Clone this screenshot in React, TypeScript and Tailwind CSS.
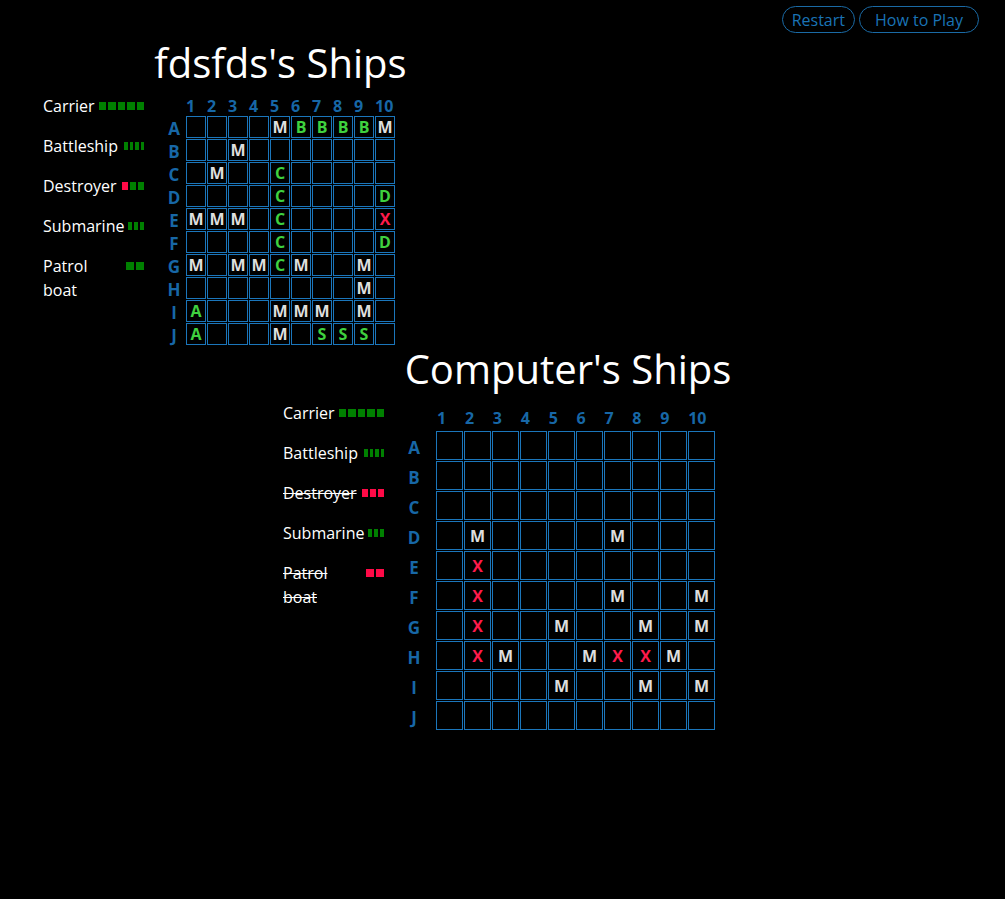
import React from "react";

type Ship = { name: string; sq: string; colors: string[]; sunk?: boolean; wrap?: boolean };

const G = "g";
const R = "r";

const playerShips: Ship[] = [
  { name: "Carrier", sq: "w-[7.4px]", colors: [G, G, G, G, G] },
  { name: "Battleship", sq: "w-[3.5px]", colors: [G, G, G, G] },
  { name: "Destroyer", sq: "w-[6px]", colors: [R, G, G] },
  { name: "Submarine", sq: "w-[4px]", colors: [G, G, G] },
  { name: "Patrol boat", sq: "w-[8px]", colors: [G, G], wrap: true },
];

const computerShips: Ship[] = [
  { name: "Carrier", sq: "w-[7.4px]", colors: [G, G, G, G, G] },
  { name: "Battleship", sq: "w-[3.5px]", colors: [G, G, G, G] },
  { name: "Destroyer", sq: "w-[6px]", colors: [R, R, R], sunk: true },
  { name: "Submarine", sq: "w-[4px]", colors: [G, G, G] },
  { name: "Patrol boat", sq: "w-[8px]", colors: [R, R], wrap: true, sunk: true },
];

function makeBoard(entries: Record<string, string>): string[][] {
  const rows = "ABCDEFGHIJ".split("");
  return rows.map((r) => {
    const row: string[] = [];
    for (let c = 1; c <= 10; c++) row.push(entries[r + c] || "");
    return row;
  });
}

const playerBoard = makeBoard({
  A5: "M", A6: "B", A7: "B", A8: "B", A9: "B", A10: "M",
  B3: "M",
  C2: "M", C5: "C",
  D5: "C", D10: "D",
  E1: "M", E2: "M", E3: "M", E5: "C", E10: "X",
  F5: "C", F10: "D",
  G1: "M", G3: "M", G4: "M", G5: "C", G6: "M", G9: "M",
  H9: "M",
  I1: "A", I5: "M", I6: "M", I7: "M", I9: "M",
  J1: "A", J5: "M", J7: "S", J8: "S", J9: "S",
});

const computerBoard = makeBoard({
  D2: "M", D7: "M",
  E2: "X",
  F2: "X", F7: "M", F10: "M",
  G2: "X", G5: "M", G8: "M", G10: "M",
  H2: "X", H3: "M", H6: "M", H7: "X", H8: "X", H9: "M",
  I5: "M", I8: "M", I10: "M",
});

function letterColor(v: string) {
  if (v === "M") return "text-[#dedede]";
  if (v === "X") return "text-[#ff1a4b]";
  return "text-[#3fd13f]";
}

function ShipList({ ships }: { ships: Ship[] }) {
  return (
    <div className="flex w-[101px] flex-col gap-4 text-[16px] leading-6 text-white">
      {ships.map((s) => (
        <div key={s.name} className="flex items-start justify-between">
          <span className={(s.wrap ? "w-[50px] " : "") + (s.sunk ? "line-through decoration-white" : "")}>
            {s.name}
          </span>
          <div className="flex h-6 items-center gap-[2px]">
            {s.colors.map((c, i) => (
              <div
                key={i}
                className={s.sq + " h-[8px] " + (c === "g" ? "bg-[#008000]" : "bg-[#ff0a47]")}
              />
            ))}
          </div>
        </div>
      ))}
    </div>
  );
}

const ROWS = "ABCDEFGHIJ".split("");
const COLS = ["1", "2", "3", "4", "5", "6", "7", "8", "9", "10"];

function SmallBoard({ board }: { board: string[][] }) {
  return (
    <div className="flex flex-col">
      <div className="ml-[21px] flex h-[20px] items-center">
        {COLS.map((c) => (
          <div key={c} className="w-[21px] text-[16px] font-bold leading-none text-[#1767a6]">
            {c}
          </div>
        ))}
      </div>
      <div className="flex">
        <div className="flex w-[18px] flex-col gap-[1px]">
          {ROWS.map((r) => (
            <div key={r} className="flex h-[22px] items-center justify-center pt-[3px] text-[17px] font-bold leading-none text-[#1767a6]">
              {r}
            </div>
          ))}
        </div>
        <div className="ml-[3px] grid grid-cols-[repeat(10,20px)] gap-[1px]">
          {board.flat().map((v, i) => (
            <div
              key={i}
              className={
                "flex h-[22px] w-[20px] items-center justify-center border border-[#1b76bb] text-[16px] font-bold leading-none " +
                letterColor(v)
              }
            >
              {v}
            </div>
          ))}
        </div>
      </div>
    </div>
  );
}

function BigBoard({ board }: { board: string[][] }) {
  return (
    <div className="flex flex-col">
      <div className="ml-[32px] flex h-[20px] items-center">
        {COLS.map((c) => (
          <div key={c} className="w-[28px] pl-[1px] text-[16px] font-bold leading-none text-[#1767a6]">
            {c}
          </div>
        ))}
      </div>
      <div className="mt-[3px] flex">
        <div className="flex w-[20px] flex-col gap-[1px]">
          {ROWS.map((r) => (
            <div key={r} className="flex h-[29px] items-center justify-center pt-[4px] text-[17px] font-bold leading-none text-[#1767a6]">
              {r}
            </div>
          ))}
        </div>
        <div className="ml-[12px] grid grid-cols-[repeat(10,27px)] gap-[1px]">
          {board.flat().map((v, i) => (
            <div
              key={i}
              className={
                "flex h-[29px] w-[27px] items-center justify-center border border-[#1b76bb] text-[16px] font-bold leading-none " +
                letterColor(v)
              }
            >
              {v}
            </div>
          ))}
        </div>
      </div>
    </div>
  );
}

export default function App() {
  return (
    <div className="min-h-[899px] w-full bg-black font-['Open_Sans',sans-serif]">
      <div className="flex justify-end gap-[4px] pr-[26px] pt-[6px]">
        <button className="h-[27px] rounded-full border border-[#1a6aa5] px-[9px] text-[16px] leading-none text-[#1a73b5]">
          Restart
        </button>
        <button className="h-[27px] rounded-full border border-[#1a6aa5] px-[15px] text-[16px] leading-none text-[#1a73b5]">
          How to Play
        </button>
      </div>

      <div className="mt-[6px] flex pl-[43px]">
        <div className="mt-[55px]">
          <ShipList ships={playerShips} />
        </div>
        <div className="ml-[21px] flex w-[231px] flex-col">
          <div className="flex h-[48px] justify-center">
            <h1 className="whitespace-nowrap text-[40px] leading-[48px] text-white">fdsfds's Ships</h1>
          </div>
          <div className="mt-[9px]">
            <SmallBoard board={playerBoard} />
          </div>
        </div>
      </div>

      <div className="flex pl-[283px]">
        <div className="mt-[56px]">
          <ShipList ships={computerShips} />
        </div>
        <div className="ml-[20px] flex w-[311px] flex-col">
          <div className="flex h-[48px] justify-center pl-[17px]">
            <h1 className="whitespace-nowrap text-[40px] leading-[48px] text-white">Computer's Ships</h1>
          </div>
          <div className="mt-[15px]">
            <BigBoard board={computerBoard} />
          </div>
        </div>
      </div>
    </div>
  );
}
